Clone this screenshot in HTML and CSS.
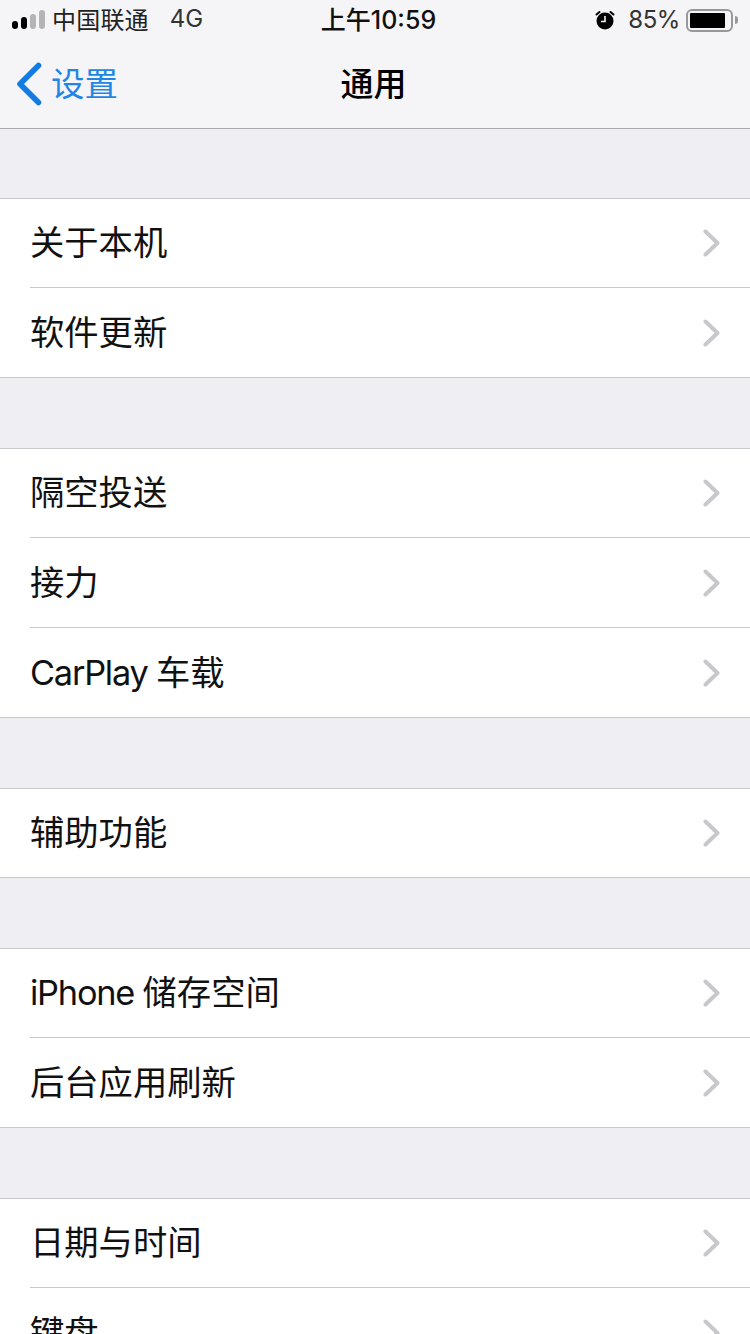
FILE: index.html
```html
<!DOCTYPE html>
<html lang="zh">
<head>
<meta charset="utf-8">
<title>通用</title>
<link rel="stylesheet" href="styles.css">
</head>
<body>
<svg class="sprite" width="0" height="0"><defs>
<symbol id="chev" viewBox="0 0 18 28"><path d="M2.5 2.5 14.500 14 2.500 25.500" fill="none" stroke="#c7c7cc" stroke-width="4" stroke-linecap="round" stroke-linejoin="round"/></symbol>
</defs></svg>
<header class="topbar">
  <div class="status">
    <div class="status-left">
      <svg class="signal" width="34" height="20" viewBox="0 0 34 20"><rect x="0" y="11" width="6" height="8" rx="3" fill="#000"/><rect x="9" y="7" width="6" height="12" rx="3" fill="#000"/><rect x="18" y="4" width="6" height="15" rx="3" fill="#b4b4b8"/><rect x="27" y="0" width="6" height="19" rx="3" fill="#b4b4b8"/></svg>
      <span class="carrier">中国联通</span>
      <span class="net">4G</span>
    </div>
    <div class="clock">上午10:59</div>
    <div class="status-right">
      <svg class="alarm" width="20" height="20" viewBox="0 0 20 20"><circle cx="10" cy="11" r="8.500" fill="#000"/><path d="M10 6v5.500H6" fill="none" stroke="#f5f5f8" stroke-width="1.600"/><path d="M1.500 4.500 4.500 2M18.500 4.500 15.500 2" stroke="#000" stroke-width="2" stroke-linecap="round"/></svg>
      <span class="pct">85%</span>
      <div class="battery"><div class="battery-fill"></div></div>
      <div class="battery-tip"></div>
    </div>
  </div>
  <nav class="navbar">
    <div class="back">
      <svg width="28" height="44" viewBox="0 0 28 44"><path d="M23.500 3.500 5 22l18.500 18.500" fill="none" stroke="#127be4" stroke-width="5.600" stroke-linecap="round" stroke-linejoin="round"/></svg>
      <span class="back-label">设置</span>
    </div>
    <h1 class="title">通用</h1>
  </nav>
</header>
<main class="list">
  <section class="group">
    <div class="row"><span class="label">关于本机</span><svg class="chev"><use href="#chev"/></svg></div>
    <div class="row"><span class="label">软件更新</span><svg class="chev"><use href="#chev"/></svg></div>
  </section>
  <section class="group">
    <div class="row"><span class="label">隔空投送</span><svg class="chev"><use href="#chev"/></svg></div>
    <div class="row"><span class="label">接力</span><svg class="chev"><use href="#chev"/></svg></div>
    <div class="row"><span class="label"><span class="latin">CarPlay </span>车载</span><svg class="chev"><use href="#chev"/></svg></div>
  </section>
  <section class="group">
    <div class="row"><span class="label">辅助功能</span><svg class="chev"><use href="#chev"/></svg></div>
  </section>
  <section class="group">
    <div class="row"><span class="label"><span class="latin">iPhone </span>储存空间</span><svg class="chev"><use href="#chev"/></svg></div>
    <div class="row"><span class="label">后台应用刷新</span><svg class="chev"><use href="#chev"/></svg></div>
  </section>
  <section class="group">
    <div class="row"><span class="label">日期与时间</span><svg class="chev"><use href="#chev"/></svg></div>
    <div class="row"><span class="label">键盘</span><svg class="chev"><use href="#chev"/></svg></div>
  </section>
</main>
</body>
</html>
```
FILE: styles.css
```css
* { box-sizing: border-box; }
html, body { margin: 0; padding: 0; }
body {
  width: 750px;
  height: 1334px;
  overflow: hidden;
  background: #eeeef3;
  font-family: "Inter", "Noto Sans CJK SC", sans-serif;
  color: #000;
}
.sprite { display: block; height: 0; }
.topbar {
  height: 129px;
  background: #f5f5f8;
  border-bottom: 1px solid #a9a9ae;
}
.status {
  height: 40px;
  display: grid;
  grid-template-columns: 1fr auto 1fr;
  align-items: center;
  padding: 0 12px;
  font-size: 24px;
  color: #222;
}
.status-left { display: flex; align-items: center; }
.signal { margin-right: 7px; }
.carrier { color: #222; margin-bottom: 4px; margin-left: -1px; letter-spacing: 0.200px; }
.net { margin-left: 21px; color: #333; margin-bottom: 4px; }
.clock { font-size: 25px; font-weight: 500; color: #111; margin: 0 0 4px 7px; }
.status-right { display: flex; align-items: center; justify-content: flex-end; }
.alarm { margin: 0 13px 1px 0; }
.pct { margin-right: 6px; color: #333; margin-bottom: 2px; letter-spacing: -0.400px; }
.battery {
  width: 47px;
  height: 23px;
  border: 2px solid #98989c;
  border-radius: 6px;
  padding: 2px;
}
.battery-fill { width: 35px; height: 15px; background: #000; border-radius: 1px; }
.battery-tip { width: 3px; height: 8px; background: #98989c; border-radius: 0 3px 3px 0; margin-left: 2px; }
.navbar {
  height: 88px;
  display: flex;
  align-items: center;
  position: relative;
  padding-left: 15px;
}
.back { display: flex; align-items: center; color: #1f86e6; }
.back-label { font-size: 33.500px; margin: 0 0 5px 8px; }
.title {
  position: absolute;
  top: 20px;
  left: 0;
  right: 3px;
  margin: 0;
  text-align: center;
  font-size: 33px;
  font-weight: 500;
  line-height: 48px;
}
.list { padding-top: 69px; }
.group {
  background: #fff;
  border-top: 1px solid #c8c8cc;
  border-bottom: 1px solid #c8c8cc;
  margin-bottom: 70px;
}
.row {
  height: 90px;
  margin-left: 30px;
  padding-right: 29px;
  display: flex;
  align-items: center;
  justify-content: space-between;
  border-bottom: 1px solid #c8c8cc;
}
.row:first-child { height: 89px; }
.row:last-child { height: 89px; border-bottom: 0; }
.row:only-child { height: 88px; }
.label { font-size: 34.300px; color: #111; margin-bottom: 6px; }
.latin { letter-spacing: -1.200px; }
.chev { width: 18px; height: 28px; }
```
